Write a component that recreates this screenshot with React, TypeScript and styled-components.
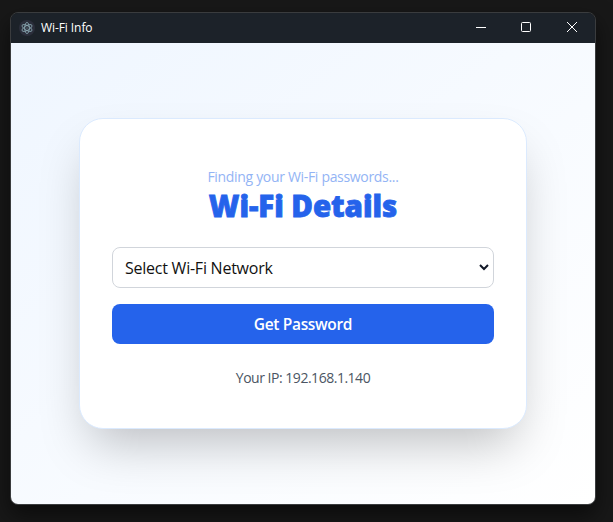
import React from 'react';
import styled, { createGlobalStyle } from 'styled-components';

const GlobalStyle = createGlobalStyle`
  * { box-sizing: border-box; }
  body {
    margin: 0;
    background: #181818;
    font-family: 'Open Sans', 'Noto Sans', sans-serif;
    overflow: hidden;
  }
`;

const Desktop = styled.div`
  width: 613px;
  height: 522px;
  padding: 12px 17px 17px 10px;
  background: #181818;
  overflow: hidden;
`;

const Window = styled.main`
  height: 493px;
  display: flex;
  flex-direction: column;
  border: 1px solid #3a3c3e;
  border-radius: 8px;
  overflow: hidden;
  box-shadow: 0 10px 22px rgba(0, 0, 0, 0.55);
`;

const TitleBar = styled.header`
  height: 30px;
  flex: none;
  display: flex;
  align-items: center;
  padding-left: 8px;
  background: #1c2229;
  color: #fff;
`;

const Title = styled.span`
  flex: 1;
  margin-left: 6px;
  font-size: 12px;
  line-height: 16px;
  letter-spacing: -0.08px;
`;

const WindowButton = styled.button<{ $nudge?: number }>`
  width: 46px;
  height: 30px;
  display: grid;
  place-items: center;
  padding: 0 0 2px ${({ $nudge = 0 }) => $nudge}px;
  border: 0;
  background: none;
  color: #fff;
`;

const Content = styled.section`
  flex: 1;
  display: flex;
  flex-direction: column;
  align-items: center;
  padding-top: 75px;
  background: linear-gradient(to bottom right, #eff6ff, #ffffff);
`;

const Card = styled.div`
  width: 448px;
  height: 311px;
  display: flex;
  flex-direction: column;
  padding: 48px 32px 0;
  border: 1px solid #dbeafe;
  border-radius: 24px;
  background: #fff;
  text-align: center;
  box-shadow: 0 25px 50px -12px rgba(0, 0, 0, 0.25);
`;

const Status = styled.p`
  margin: 0;
  font-size: 14px;
  line-height: 20px;
  letter-spacing: -0.32px;
  color: #93b4f5;
`;

const Heading = styled.h1`
  margin: 1px 0 23px;
  font-family: 'Noto Sans', 'Open Sans', sans-serif;
  font-size: 29.5px;
  line-height: 36px;
  font-weight: 900;
  letter-spacing: -0.05px;
  -webkit-text-stroke: 0.8px #2563eb;
  color: #2563eb;
`;

const SelectBox = styled.button`
  height: 41px;
  flex: none;
  display: flex;
  align-items: center;
  justify-content: space-between;
  padding: 0 4px 0 12px;
  border: 1px solid #d1d5db;
  border-radius: 8px;
  background: #fff;
  font: 400 16px/24px 'Open Sans', 'Noto Sans', sans-serif;
  letter-spacing: -0.24px;
  color: #111;
`;

const Submit = styled.button`
  height: 40px;
  flex: none;
  margin: 16px 0 24px;
  padding: 0;
  border: 0;
  border-radius: 8px;
  background: #2563eb;
  font: 600 15.5px/24px 'Open Sans', 'Noto Sans', sans-serif;
  letter-spacing: -0.34px;
  color: #fff;
`;

const Address = styled.p`
  margin: 0;
  font-size: 14px;
  line-height: 20px;
  letter-spacing: -0.48px;
  color: #4b5563;
`;

const AppIcon = () => (
  <svg width="16" height="16" viewBox="0 0 16 16" fill="none" aria-hidden="true">
    <circle cx="8" cy="8" r="8" fill="#2b2e3b" />
    <g stroke="#9fc3cd" strokeWidth="0.65">
      <ellipse cx="8" cy="8" rx="5.6" ry="2.3" transform="rotate(30 8 8)" />
      <ellipse cx="8" cy="8" rx="5.6" ry="2.3" transform="rotate(-30 8 8)" />
      <ellipse cx="8" cy="8" rx="5.6" ry="2.3" transform="rotate(90 8 8)" />
    </g>
    <circle cx="8" cy="8" r="0.5" fill="#9fc3cd" />
  </svg>
);

export default function App() {
  return (
    <>
      <GlobalStyle />
      <Desktop>
        <Window>
          <TitleBar>
            <AppIcon />
            <Title>Wi-Fi Info</Title>
            <WindowButton aria-label="Minimize" $nudge={2}>
              <svg width="10" height="10" stroke="currentColor"><path d="M0 5.5h10" /></svg>
            </WindowButton>
            <WindowButton aria-label="Maximize">
              <svg width="10" height="10" fill="none" stroke="currentColor"><rect x="0.5" y="0.5" width="9" height="9" rx="1" /></svg>
            </WindowButton>
            <WindowButton aria-label="Close">
              <svg width="10" height="10" stroke="currentColor"><path d="M0 0l10 10M10 0L0 10" /></svg>
            </WindowButton>
          </TitleBar>
          <Content>
            <Card>
              <Status>Finding your Wi-Fi passwords...</Status>
              <Heading>Wi-Fi Details</Heading>
              <SelectBox>
                Select Wi-Fi Network
                <svg width="10" height="9" fill="none" stroke="#111827" strokeWidth="2"><path d="M1 2l4 4 4-4" /></svg>
              </SelectBox>
              <Submit>Get Password</Submit>
              <Address>Your IP: 192.168.1.140</Address>
            </Card>
          </Content>
        </Window>
      </Desktop>
    </>
  );
}
